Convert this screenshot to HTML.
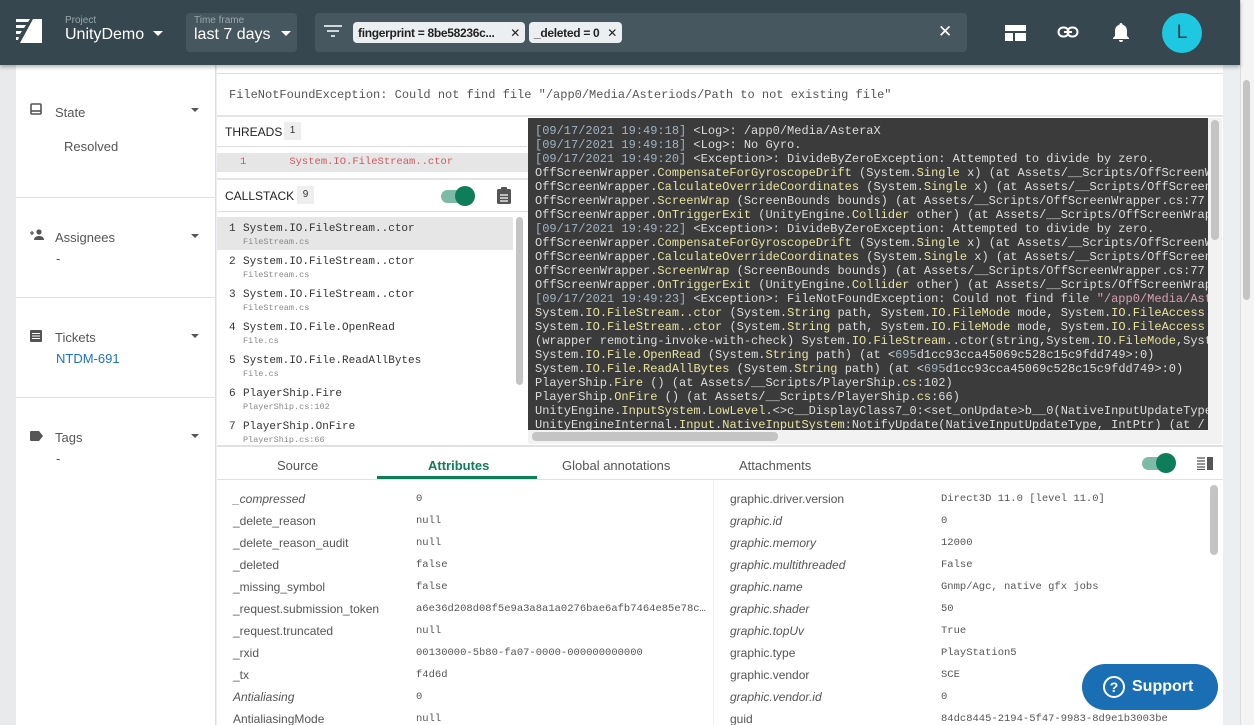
<!DOCTYPE html>
<html><head><meta charset="utf-8"><style>
*{box-sizing:border-box;margin:0;padding:0}
html{width:1254px;height:725px;overflow:hidden}
body{width:1254px;height:725px;overflow:hidden;background:#eceff1;font-family:"Liberation Sans",sans-serif;position:relative;color:#333}
.abs{position:absolute}
.hdr{left:0;top:0;width:1240px;height:65px;background:#37474f;box-shadow:0 2px 4px rgba(0,0,0,.3);z-index:5}
.mono{font-family:"Liberation Mono",monospace}
.chip{position:absolute;top:22px;height:21px;background:#eceff1;border-radius:4px;font-size:12px;font-weight:bold;color:#222;padding:4px 5px;letter-spacing:-.3px;white-space:nowrap}
.left{left:16px;top:65px;width:200px;height:660px;background:#fff;border-right:1px solid #ddd}
.sec{position:absolute;left:0;width:200px;border-bottom:1px solid #e0e0e0}
.sec .t{position:absolute;left:39px;font-size:13px;color:#555}
.sec .v{position:absolute;left:48px;font-size:13px;color:#555}
.caret{position:absolute;left:175px;width:0;height:0;border-left:4px solid transparent;border-right:4px solid transparent;border-top:4px solid #555}
.log{left:528px;top:118px;width:680px;height:312px;background:#3b3b3b;font-size:12px;line-height:14px;color:#ddd;white-space:pre;overflow:hidden;padding:6px 0 0 7px}
.log .y{color:#e8e3a0}.log .b{color:#9fb4c4}.log .p{color:#d9a0b4}
.cs{position:absolute;left:0;width:296px;height:33px;font-size:11px;color:#333;white-space:nowrap}
.cs .n{position:absolute;left:12px;top:6px}
.cs .f{position:absolute;left:26px;top:6px}
.cs .s{position:absolute;left:26px;top:20px;font-size:8.5px;color:#888}
.row{position:absolute;height:22px;font-size:12px;color:#555;white-space:nowrap;width:480px}
.row .k{position:absolute;left:0}
.row .val{position:absolute;font-family:"Liberation Mono",monospace;font-size:10.5px;color:#555;top:1px;white-space:nowrap}
.tab{position:absolute;top:458px;font-size:13px;color:#555}
</style></head><body>
<div class="abs" style="left:0;top:0;width:16px;height:725px;background:#e8eaec"></div>
<div class="abs hdr">
 <svg class="abs" style="left:16px;top:18px" width="26" height="26" viewBox="0 0 26 26"><path d="M0 1h14l-2 3H0zM0 7h10l-2 3H0zM0 13h6l-2 3H0zM0 19h3l-1 3H0zM17 1h9v24H4z" fill="#fff"/></svg>
 <div class="abs" style="left:65px;top:15px;font-size:10px;color:#9aa7ad">Project</div>
 <div class="abs" style="left:65px;top:26px;font-size:16px;color:#fff">UnityDemo</div>
 <div class="abs" style="left:153px;top:31px;border-left:5px solid transparent;border-right:5px solid transparent;border-top:5px solid #fff"></div>
 <div class="abs" style="left:186px;top:13px;width:111px;height:39px;background:#47575f;border-radius:4px"></div>
 <div class="abs" style="left:194px;top:15px;font-size:10px;color:#9aa7ad">Time frame</div>
 <div class="abs" style="left:194px;top:26px;font-size:16px;color:#fff">last 7 days</div>
 <div class="abs" style="left:281px;top:31px;border-left:5px solid transparent;border-right:5px solid transparent;border-top:5px solid #fff"></div>
 <div class="abs" style="left:315px;top:13px;width:652px;height:39px;background:#47575f;border-radius:4px"></div>
 <svg class="abs" style="left:324px;top:24px" width="18" height="16"><path d="M0 2h18M3 7h12M7 12h4" stroke="#cfd8dc" stroke-width="2"/></svg>
 <div class="chip" style="left:353px;width:172px">fingerprint = 8be58236c...<span style="position:absolute;right:5px;font-weight:normal">✕</span></div>
 <div class="chip" style="left:529px;width:93px">_deleted = 0<span style="position:absolute;right:5px;font-weight:normal">✕</span></div>
 <div class="abs" style="left:938px;top:22px;color:#fff;font-size:17px">✕</div>
 <svg class="abs" style="left:1005px;top:25px" width="21" height="16"><path d="M0 0h21v6H0zM0 8h8v8H0zM10 8h11v8H10z" fill="#fff"/></svg>
 <svg class="abs" style="left:1057px;top:25px" width="22" height="14"><rect x="1.5" y="2.5" width="10" height="9" rx="4.5" fill="none" stroke="#fff" stroke-width="2"/><rect x="10.5" y="2.5" width="10" height="9" rx="4.5" fill="none" stroke="#fff" stroke-width="2"/><path d="M7 7h8" stroke="#fff" stroke-width="2"/></svg>
 <svg class="abs" style="left:1112px;top:22px" width="18" height="21"><path d="M9 1c1 0 1.5.7 1.5 1.6C13.5 3.5 15 6 15 9v5l2 2v1H1v-1l2-2V9c0-3 1.5-5.5 4.5-6.4C7.5 1.7 8 1 9 1zM7 18h4a2 2 0 0 1-4 0z" fill="#fff"/></svg>
 <div class="abs" style="left:1162px;top:13px;width:40px;height:40px;border-radius:50%;background:#1ec8e0;color:#2a3b44;font-size:19px;text-align:center;line-height:40px">L</div>
</div>
<div class="abs" style="left:1240px;top:0;width:14px;height:725px;background:#f4f4f4;border-left:1px solid #ddd"></div>
<div class="abs" style="left:1243px;top:80px;width:7px;height:220px;background:#c4c4c4;border-radius:4px"></div>

<div class="abs left">
 <div class="sec" style="top:0;height:133px">
  <svg class="abs" style="left:14px;top:38px" width="12" height="12"><rect x="1" y="1" width="10" height="10" rx="1" fill="none" stroke="#555" stroke-width="1.6"/><path d="M1 8h10" stroke="#555" stroke-width="1.6"/></svg>
  <div class="t" style="top:40px">State</div><div class="caret" style="top:43px"></div>
  <div class="v" style="top:74px">Resolved</div>
 </div>
 <div class="sec" style="top:133px;height:100px">
  <svg class="abs" style="left:14px;top:31px" width="14" height="12"><path d="M0 4h4M2 2v4" stroke="#555" stroke-width="1.3"/><circle cx="9" cy="3" r="2.6" fill="#555"/><path d="M4 11c0-3 2.5-4 5-4s5 1 5 4z" fill="#555"/></svg>
  <div class="t" style="top:32px">Assignees</div><div class="caret" style="top:36px"></div>
  <div class="v" style="top:53px;left:40px">-</div>
 </div>
 <div class="sec" style="top:233px;height:100px">
  <svg class="abs" style="left:14px;top:32px" width="12" height="12"><rect x="0" y="0" width="12" height="12" rx="1" fill="#555"/><path d="M2 3.5h8M2 6h8M2 8.5h8" stroke="#fff" stroke-width="1"/></svg>
  <div class="t" style="top:32px">Tickets</div><div class="caret" style="top:36px"></div>
  <div class="v" style="top:53px;left:40px;color:#1a73c4;font-size:13px">NTDM-691</div>
 </div>
 <div class="sec" style="top:333px;height:100px;border:none">
  <svg class="abs" style="left:14px;top:33px" width="13" height="10"><path d="M0 1a1 1 0 0 1 1-1h8l4 5-4 5H1a1 1 0 0 1-1-1z" fill="#555"/></svg>
  <div class="t" style="top:32px">Tags</div><div class="caret" style="top:36px"></div>
  <div class="v" style="top:53px;left:40px">-</div>
 </div>
</div>

<div class="abs" style="left:217px;top:65px;width:1006px;height:660px;background:#fff"></div>
<div class="abs" style="left:217px;top:73px;width:1006px;height:1px;background:#ddd"></div>
<div class="abs mono" style="left:229px;top:88px;font-size:12px;color:#555;white-space:nowrap">FileNotFoundException: Could not find file "/app0/Media/Asteriods/Path to not existing file"</div>
<div class="abs" style="left:217px;top:115px;width:1006px;height:2px;background:#e4e4e4"></div>

<div class="abs" style="left:225px;top:125px;font-size:12px;color:#222">THREADS</div>
<div class="abs" style="left:284px;top:122px;width:17px;height:18px;background:#eee;font-size:10px;text-align:center;line-height:18px">1</div>
<div class="abs" style="left:217px;top:146px;width:310px;height:1px;background:#ddd"></div>
<div class="abs mono" style="left:217px;top:153px;width:311px;height:19px;background:#e6e6e6;font-size:10.5px;color:#d2585e;line-height:19px;white-space:nowrap"><span style="margin-left:23px">1</span><span style="margin-left:43px">System.IO.FileStream..ctor</span></div>
<div class="abs" style="left:217px;top:178px;width:311px;height:2px;background:#e4e4e4"></div>
<div class="abs" style="left:225px;top:189px;font-size:12px;color:#222">CALLSTACK</div>
<div class="abs" style="left:297px;top:186px;width:17px;height:18px;background:#eee;font-size:10px;text-align:center;line-height:18px">9</div>
<div class="abs" style="left:441px;top:190px;width:30px;height:13px;border-radius:7px;background:#7dbba6"></div>
<div class="abs" style="left:455px;top:186px;width:20px;height:20px;border-radius:50%;background:#0e7d5a"></div>
<svg class="abs" style="left:497px;top:187px" width="14" height="17"><rect x="0" y="2" width="14" height="15" rx="1.5" fill="#555"/><rect x="4" y="0" width="6" height="4" rx="1" fill="#555"/><path d="M3 8h8M3 11h8M3 14h8" stroke="#fff" stroke-width="1.2"/></svg>
<div class="abs" style="left:217px;top:211px;width:311px;height:1px;background:#ddd"></div>
<div class="abs mono" style="left:217px;top:217px;width:296px;height:227px;overflow:hidden">
 <div class="cs" style="top:0;background:#e6e6e6"><span class="n">1</span><span class="f">System.IO.FileStream..ctor</span><span class="s">FileStream.cs</span></div>
 <div class="cs" style="top:33px"><span class="n">2</span><span class="f">System.IO.FileStream..ctor</span><span class="s">FileStream.cs</span></div>
 <div class="cs" style="top:66px"><span class="n">3</span><span class="f">System.IO.FileStream..ctor</span><span class="s">FileStream.cs</span></div>
 <div class="cs" style="top:99px"><span class="n">4</span><span class="f">System.IO.File.OpenRead</span><span class="s">File.cs</span></div>
 <div class="cs" style="top:132px"><span class="n">5</span><span class="f">System.IO.File.ReadAllBytes</span><span class="s">File.cs</span></div>
 <div class="cs" style="top:165px"><span class="n">6</span><span class="f">PlayerShip.Fire</span><span class="s">PlayerShip.cs:102</span></div>
 <div class="cs" style="top:198px"><span class="n">7</span><span class="f">PlayerShip.OnFire</span><span class="s">PlayerShip.cs:66</span></div>
</div>
<div class="abs" style="left:516px;top:217px;width:7px;height:168px;background:#c4c4c4;border-radius:4px"></div>

<div class="abs log mono"><span class="b">[09/17/2021 19:49:18]</span> &lt;Log&gt;: /app0/Media/AsteraX
<span class="b">[09/17/2021 19:49:18]</span> &lt;Log&gt;: No Gyro.
<span class="b">[09/17/2021 19:49:20]</span> &lt;Exception&gt;: DivideByZeroException: Attempted to divide by zero.
OffScreenWrapper.<span class="y">CompensateForGyroscopeDrift</span> (System.<span class="y">Single</span> x) (at Assets/__Scripts/OffScreenWrapper
OffScreenWrapper.<span class="y">CalculateOverrideCoordinates</span> (System.<span class="y">Single</span> x) (at Assets/__Scripts/OffScreenWrapper
OffScreenWrapper.<span class="y">ScreenWrap</span> (ScreenBounds bounds) (at Assets/__Scripts/OffScreenWrapper.cs:77
OffScreenWrapper.<span class="y">OnTriggerExit</span> (UnityEngine.<span class="y">Collider</span> other) (at Assets/__Scripts/OffScreenWrapper
<span class="b">[09/17/2021 19:49:22]</span> &lt;Exception&gt;: DivideByZeroException: Attempted to divide by zero.
OffScreenWrapper.<span class="y">CompensateForGyroscopeDrift</span> (System.<span class="y">Single</span> x) (at Assets/__Scripts/OffScreenWrapper
OffScreenWrapper.<span class="y">CalculateOverrideCoordinates</span> (System.<span class="y">Single</span> x) (at Assets/__Scripts/OffScreenWrapper
OffScreenWrapper.<span class="y">ScreenWrap</span> (ScreenBounds bounds) (at Assets/__Scripts/OffScreenWrapper.cs:77
OffScreenWrapper.<span class="y">OnTriggerExit</span> (UnityEngine.<span class="y">Collider</span> other) (at Assets/__Scripts/OffScreenWrapper
<span class="b">[09/17/2021 19:49:23]</span> &lt;Exception&gt;: FileNotFoundException: Could not find file <span class="p">"/app0/Media/AsteraX</span>
System.<span class="y">IO</span>.<span class="y">FileStream..ctor</span> (System.<span class="y">String</span> path, System.<span class="y">IO</span>.<span class="y">FileMode</span> mode, System.<span class="y">IO</span>.<span class="y">FileAccess</span>
System.<span class="y">IO</span>.<span class="y">FileStream..ctor</span> (System.<span class="y">String</span> path, System.<span class="y">IO</span>.<span class="y">FileMode</span> mode, System.<span class="y">IO</span>.<span class="y">FileAccess</span>
(wrapper remoting-invoke-with-check) System.<span class="y">IO</span>.<span class="y">FileStream</span>..ctor(string,System.<span class="y">IO</span>.<span class="y">FileMode</span>,System
System.<span class="y">IO</span>.<span class="y">File</span>.<span class="y">OpenRead</span> (System.<span class="y">String</span> path) (at &lt;<span class="b">695</span>d1cc93cca45069c528c15c9fdd749&gt;:0)
System.<span class="y">IO</span>.<span class="y">File</span>.<span class="y">ReadAllBytes</span> (System.<span class="y">String</span> path) (at &lt;<span class="b">695</span>d1cc93cca45069c528c15c9fdd749&gt;:0)
PlayerShip.<span class="y">Fire</span> () (at Assets/__Scripts/PlayerShip.<span class="y">cs</span>:102)
PlayerShip.<span class="y">OnFire</span> () (at Assets/__Scripts/PlayerShip.<span class="y">cs</span>:66)
UnityEngine.<span class="y">InputSystem</span>.<span class="y">LowLevel</span>.&lt;&gt;c__DisplayClass7_0:&lt;set_onUpdate&gt;b__0(NativeInputUpdateType
UnityEngineInternal.<span class="y">Input</span>.<span class="y">NativeInputSystem</span>:NotifyUpdate(NativeInputUpdateType, IntPtr) (at /
</div>
<div class="abs" style="left:1208px;top:118px;width:14px;height:326px;background:#f2f2f2"></div>
<div class="abs" style="left:1211px;top:120px;width:8px;height:120px;background:#c4c4c4;border-radius:4px"></div>
<div class="abs" style="left:528px;top:430px;width:680px;height:14px;background:#f2f2f2"></div>
<div class="abs" style="left:532px;top:432px;width:246px;height:9px;background:#c4c4c4;border-radius:4px"></div>

<div class="abs" style="left:217px;top:445px;width:1006px;height:2px;background:#e0e0e0"></div>
<div class="tab" style="left:277px">Source</div>
<div class="tab" style="left:428px;color:#0e7d5a;font-weight:bold">Attributes</div>
<div class="tab" style="left:562px">Global annotations</div>
<div class="tab" style="left:739px">Attachments</div>
<div class="abs" style="left:377px;top:476px;width:160px;height:3px;background:#0e7d5a"></div>
<div class="abs" style="left:217px;top:479px;width:1006px;height:1px;background:#e0e0e0"></div>
<div class="abs" style="left:1142px;top:457px;width:30px;height:13px;border-radius:7px;background:#7dbba6"></div>
<div class="abs" style="left:1156px;top:453px;width:20px;height:20px;border-radius:50%;background:#0e7d5a"></div>
<svg class="abs" style="left:1197px;top:457px" width="16" height="13"><path d="M0 1h8M0 4h8M0 7h8M0 10h8M0 12.5h8" stroke="#555" stroke-width="1.3"/><rect x="10" y="0" width="6" height="13" fill="#555"/></svg>
<div class="abs" style="left:713px;top:480px;width:1px;height:245px;background:#eee"></div>

<div class="abs" style="left:233px;top:492px">
 <div class="row" style="top:0"><i class="k">_compressed</i><span class="val" style="left:183px">0</span></div>
 <div class="row" style="top:22px"><span class="k">_delete_reason</span><span class="val" style="left:183px">null</span></div>
 <div class="row" style="top:44px"><span class="k">_delete_reason_audit</span><span class="val" style="left:183px">null</span></div>
 <div class="row" style="top:66px"><span class="k">_deleted</span><span class="val" style="left:183px">false</span></div>
 <div class="row" style="top:88px"><span class="k">_missing_symbol</span><span class="val" style="left:183px">false</span></div>
 <div class="row" style="top:110px"><span class="k">_request.submission_token</span><span class="val" style="left:183px">a6e36d208d08f5e9a3a8a1a0276bae6afb7464e85e78c…</span></div>
 <div class="row" style="top:132px"><span class="k">_request.truncated</span><span class="val" style="left:183px">null</span></div>
 <div class="row" style="top:154px"><span class="k">_rxid</span><span class="val" style="left:183px">00130000-5b80-fa07-0000-000000000000</span></div>
 <div class="row" style="top:176px"><span class="k">_tx</span><span class="val" style="left:183px">f4d6d</span></div>
 <div class="row" style="top:198px"><i class="k">Antialiasing</i><span class="val" style="left:183px">0</span></div>
 <div class="row" style="top:220px"><span class="k">AntialiasingMode</span><span class="val" style="left:183px">null</span></div>
</div>
<div class="abs" style="left:730px;top:492px">
 <div class="row" style="top:0"><span class="k">graphic.driver.version</span><span class="val" style="left:211px">Direct3D 11.0 [level 11.0]</span></div>
 <div class="row" style="top:22px"><i class="k">graphic.id</i><span class="val" style="left:211px">0</span></div>
 <div class="row" style="top:44px"><i class="k">graphic.memory</i><span class="val" style="left:211px">12000</span></div>
 <div class="row" style="top:66px"><i class="k">graphic.multithreaded</i><span class="val" style="left:211px">False</span></div>
 <div class="row" style="top:88px"><i class="k">graphic.name</i><span class="val" style="left:211px">Gnmp/Agc, native gfx jobs</span></div>
 <div class="row" style="top:110px"><i class="k">graphic.shader</i><span class="val" style="left:211px">50</span></div>
 <div class="row" style="top:132px"><i class="k">graphic.topUv</i><span class="val" style="left:211px">True</span></div>
 <div class="row" style="top:154px"><span class="k">graphic.type</span><span class="val" style="left:211px">PlayStation5</span></div>
 <div class="row" style="top:176px"><span class="k">graphic.vendor</span><span class="val" style="left:211px">SCE</span></div>
 <div class="row" style="top:198px"><i class="k">graphic.vendor.id</i><span class="val" style="left:211px">0</span></div>
 <div class="row" style="top:220px"><span class="k">guid</span><span class="val" style="left:211px">84dc8445-2194-5f47-9983-8d9e1b3003be</span></div>
</div>
<div class="abs" style="left:1210px;top:485px;width:8px;height:70px;background:#c4c4c4;border-radius:4px"></div>

<div class="abs" style="left:1082px;top:664px;width:136px;height:46px;border-radius:23px;background:#1a6fb4;color:#fff;font-weight:bold;font-size:16px;line-height:46px;padding-left:50px;white-space:nowrap">Support</div>
<div class="abs" style="left:1103px;top:676px;width:22px;height:22px;border-radius:50%;border:2px solid #fff;color:#fff;font-size:14px;font-weight:bold;text-align:center;line-height:18px">?</div>
</body></html>
